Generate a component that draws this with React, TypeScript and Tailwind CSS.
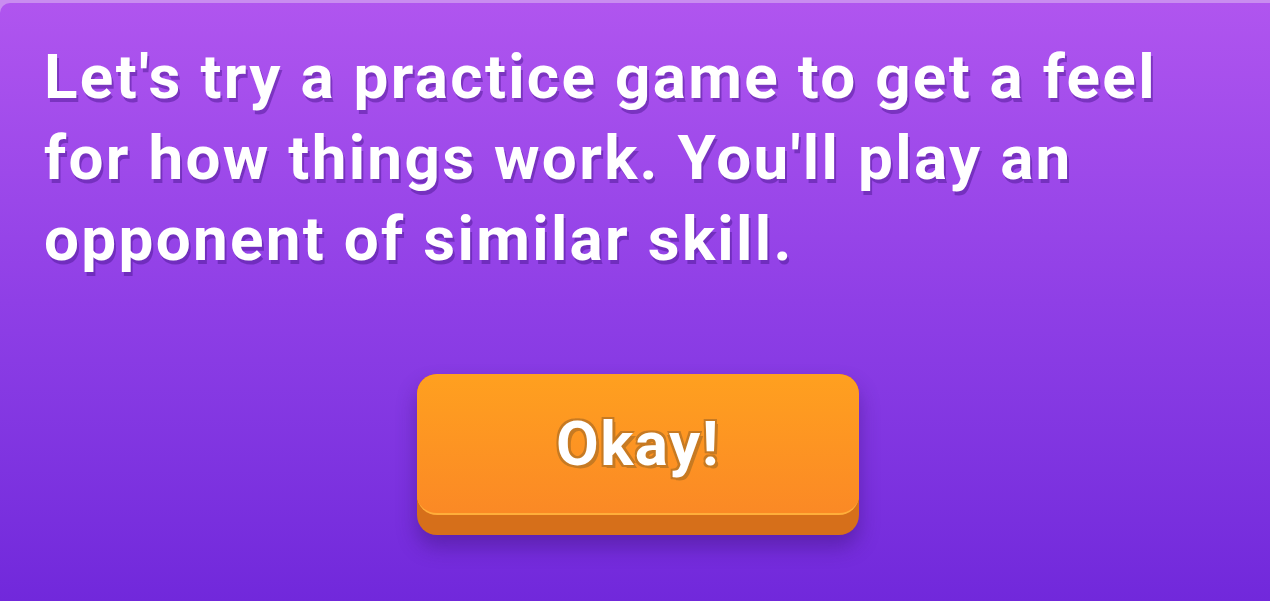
const App = () => {
	return (
		<div className="h-[601px] w-[1270px] overflow-hidden bg-[#c98cf0]">
			<div className="mt-[3px] flex h-[598px] flex-col rounded-tl-[10px] bg-gradient-to-b from-[#b055ef] via-[#8f3fe6] to-[#7128db] pl-[44px] pr-[40px] pt-[33px]">
				<p className="font-['Roboto',sans-serif] text-[62px] font-bold leading-[81px] tracking-[2.3px] text-white [text-shadow:2px_4px_0_rgba(70,20,140,0.45)]">
					Let's try a practice game to get a feel for how things work. You'll play an opponent of similar skill.
				</p>
				<div className="mt-[95px] flex justify-center">
					<button className="ml-[2px] h-[161px] w-[442px] rounded-[20px] bg-[#d66f1a] pb-[20px] shadow-[0_12px_20px_rgba(60,20,120,0.45)]">
						<div className="flex h-full items-center justify-center rounded-[20px] border-b-2 border-[#ffae3a] bg-gradient-to-b from-[#ffa01f] to-[#fb8925]">
							<span className="font-['Roboto',sans-serif] text-[62px] font-bold tracking-[1.5px] text-white [text-shadow:-2px_-2px_0_#c77a22,2px_-2px_0_#c77a22,-2px_2px_0_#c77a22,3px_3px_0_#c77a22]">
								Okay!
							</span>
						</div>
					</button>
				</div>
			</div>
		</div>
	);
};

export default App;
